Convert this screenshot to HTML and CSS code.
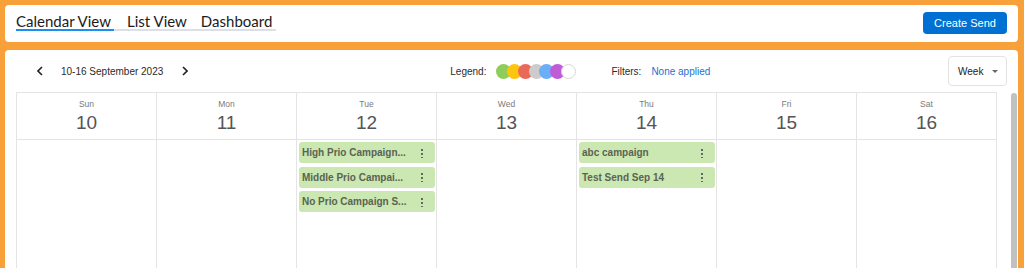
FILE: index.html
```html
<!DOCTYPE html>
<html>
<head>
  <title>Sends Calendar</title>
  <link rel="stylesheet" href="styles.css">
</head>
<body>
  <div class="card top-bar">
    <div class="tabs">
      <div class="tab active">Calendar View</div>
      <div class="tab">List View</div>
      <div class="tab">Dashboard</div>
    </div>
    <button class="btn-primary">Create Send</button>
  </div>

  <div class="card calendar">
    <div class="toolbar">
      <svg class="chev prev" width="6" height="10" viewBox="0 0 6 10"><path d="M5 1 1 5l4 4" fill="none" stroke="#222" stroke-width="1.6"/></svg>
      <span class="range">10-16 September 2023</span>
      <svg class="chev next" width="6" height="10" viewBox="0 0 6 10"><path d="M1 1l4 4-4 4" fill="none" stroke="#222" stroke-width="1.6"/></svg>

      <span class="legend-label">Legend:</span>
      <div class="legend">
        <span class="swatch" style="background:#8fcd5a"></span>
        <span class="swatch" style="background:#fdc50f"></span>
        <span class="swatch" style="background:#ea6a59"></span>
        <span class="swatch" style="background:#cccccc"></span>
        <span class="swatch" style="background:#6aaef5"></span>
        <span class="swatch" style="background:#bf5cd6"></span>
        <span class="swatch white"></span>
      </div>

      <span class="filters-label">Filters:</span>
      <a class="filters-link">None applied</a>

      <div class="select">Week <span class="caret"></span></div>
    </div>

    <div class="calendar-body">
      <div class="grid">
        <div class="day">
          <div class="day-head"><span class="dow">Sun</span><span class="num">10</span></div>
          <div class="events"></div>
        </div>
        <div class="day">
          <div class="day-head"><span class="dow">Mon</span><span class="num">11</span></div>
          <div class="events"></div>
        </div>
        <div class="day">
          <div class="day-head"><span class="dow">Tue</span><span class="num">12</span></div>
          <div class="events">
            <div class="event"><span>High Prio Campaign...</span><i class="kebab"></i></div>
            <div class="event"><span>Middle Prio Campai...</span><i class="kebab"></i></div>
            <div class="event"><span>No Prio Campaign S...</span><i class="kebab"></i></div>
          </div>
        </div>
        <div class="day">
          <div class="day-head"><span class="dow">Wed</span><span class="num">13</span></div>
          <div class="events"></div>
        </div>
        <div class="day">
          <div class="day-head"><span class="dow">Thu</span><span class="num">14</span></div>
          <div class="events">
            <div class="event"><span>abc campaign</span><i class="kebab"></i></div>
            <div class="event"><span>Test Send Sep 14</span><i class="kebab"></i></div>
          </div>
        </div>
        <div class="day">
          <div class="day-head"><span class="dow">Fri</span><span class="num">15</span></div>
          <div class="events"></div>
        </div>
        <div class="day">
          <div class="day-head"><span class="dow">Sat</span><span class="num">16</span></div>
          <div class="events"></div>
        </div>
      </div>
      <div class="scrollbar"><div class="thumb"></div></div>
    </div>
  </div>
</body>
</html>
```

FILE: styles.css
```css
html, body {
  height: 100%;
}
body {
  margin: 0;
  padding: 5px 6px 0 5px;
  box-sizing: border-box;
  background: #f8a03a;
  font-family: "Liberation Sans", Arial, sans-serif;
  color: #222;
  overflow: hidden;
}
.card {
  background: #fff;
  border-radius: 4px;
}
.top-bar {
  height: 37px;
  box-sizing: border-box;
  padding: 8px 11px 0 11px;
  display: flex;
  justify-content: space-between;
  align-items: flex-start;
  margin-bottom: 8px;
}
.tabs {
  display: flex;
  border-bottom: 2px solid #dcdfe5;
  padding-right: 4px;
}
.tab {
  font-family: Lato, "Open Sans", sans-serif;
  font-size: 15px;
  line-height: 16px;
  color: #1b1b1b;
  margin-right: 14px;
  border-bottom: 2px solid transparent;
  margin-bottom: -2px;
}
.tab:last-child {
  margin-right: 0;
}
.tab.active {
  border-bottom-color: #1b8ef0;
  padding-right: 3px;
  margin-right: 13px;
}
.btn-primary {
  margin-top: -1px;
  height: 22px;
  width: 84px;
  border: 0;
  border-radius: 4px;
  background: #0070d2;
  color: #fff;
  font-family: "Liberation Sans", Arial, sans-serif;
  font-size: 11px;
  padding: 0;
}

.calendar {
  height: 218px;
  overflow: hidden;
  border-radius: 4px 4px 0 0;
}
.toolbar {
  height: 42px;
  padding: 0 11px;
  display: flex;
  align-items: center;
  font-size: 10px;
  color: #2b2b2b;
}
.chev.prev {
  margin-left: 21px;
}
.range {
  margin-left: 18px;
}
.chev.next {
  margin-left: 19px;
}
.legend-label {
  margin-left: 262px;
}
.legend {
  display: flex;
  margin-left: 10px;
}
.swatch {
  width: 15px;
  height: 15px;
  border-radius: 50%;
  margin-right: -4.3px;
}
.swatch.white {
  background: #fff;
  box-sizing: border-box;
  border: 1px solid #d8d8d8;
}
.filters-label {
  margin-left: 40px;
}
.filters-link {
  margin-left: 10px;
  color: #1c6fd0;
}
.select {
  margin-left: auto;
  width: 59px;
  height: 30px;
  box-sizing: border-box;
  border: 1px solid #e3e3e3;
  border-radius: 4px;
  display: flex;
  align-items: center;
  padding-left: 9px;
  color: #222;
}
.caret {
  margin-left: 9px;
  width: 0;
  height: 0;
  border-left: 3px solid transparent;
  border-right: 3px solid transparent;
  border-top: 3px solid #666;
}

.calendar-body {
  display: flex;
  padding-left: 11px;
}
.grid {
  display: flex;
  border-left: 1px solid #e4e4e4;
  border-top: 1px solid #e4e4e4;
}
.day {
  width: 139px;
  border-right: 1px solid #e4e4e4;
  height: 200px;
}
.day-head {
  height: 46px;
  border-bottom: 1px solid #e4e4e4;
  display: flex;
  flex-direction: column;
  align-items: center;
}
.dow {
  margin-top: 6px;
  font-size: 8.5px;
  color: #7a7a7a;
}
.num {
  margin-top: 3px;
  font-size: 19px;
  color: #555;
}
.events {
  padding: 2px 1px 0 2px;
  display: flex;
  flex-direction: column;
  gap: 3.5px;
}
.event {
  height: 21px;
  border-radius: 3px;
  background: #cbe7b2;
  display: flex;
  align-items: center;
  justify-content: space-between;
  padding: 0 12px 0 3px;
  font-size: 10px;
  font-weight: bold;
  color: #5a6352;
  white-space: nowrap;
}
.kebab {
  width: 2px;
  height: 10px;
  background: radial-gradient(circle, #666 0.9px, transparent 1.1px) 0 0 / 2px 4px repeat-y;
}
.scrollbar {
  margin-left: 14px;
  width: 6px;
  padding-top: 1px;
}
.thumb {
  height: 200px;
  background: #c1c1c1;
  border-radius: 3px;
}
```
